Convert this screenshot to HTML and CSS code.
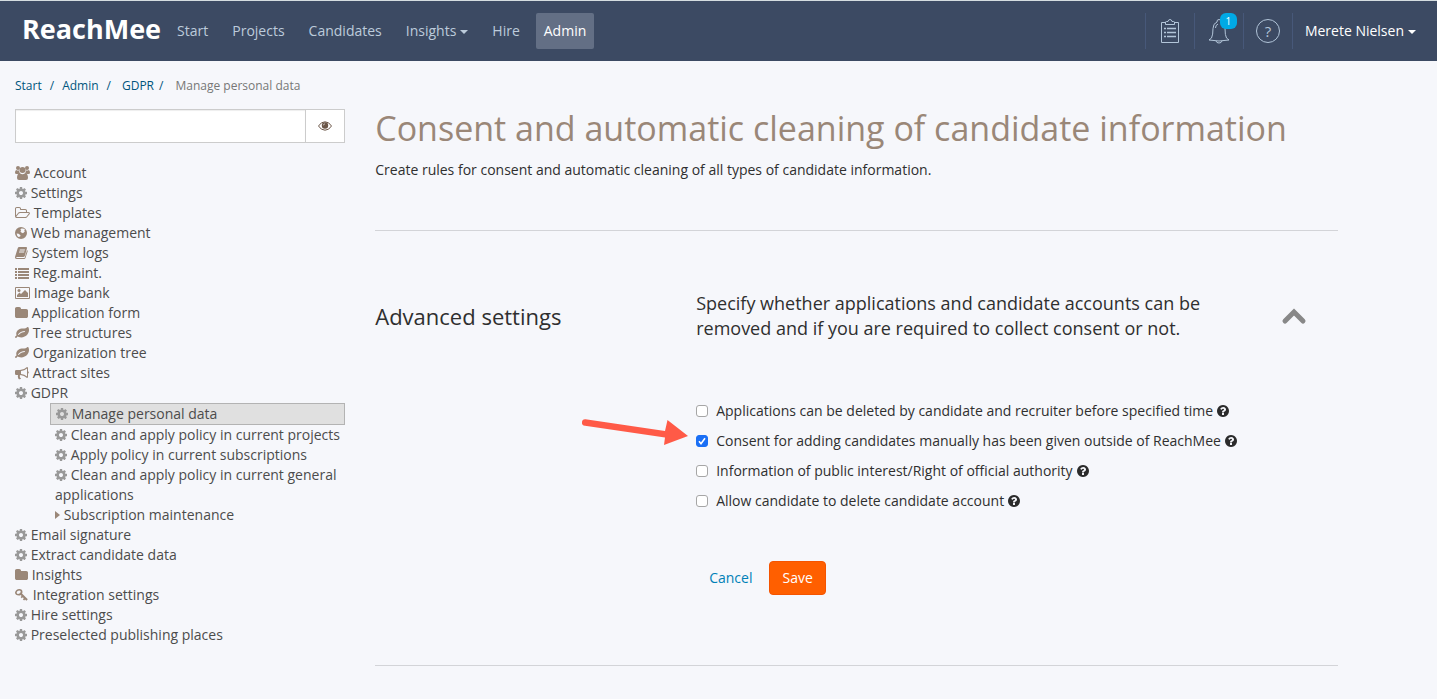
FILE: index.html
```
<!DOCTYPE html>
<html lang="en">

<head>
    <meta charset="UTF-8">
    <meta name="viewport" content="width=device-width, initial-scale=1.0">
    <title>ReachMee - Manage personal data</title>
    <link rel="stylesheet" href="styles.css">
</head>

<body>
    <!-- Icon sprite -->
    <svg class="sprite" aria-hidden="true">
        <symbol id="cog" viewBox="128 0 1536 1792">
            <path d="M1152 896q0-106-75-181t-181-75-181 75-75 181 75 181 181 75 181-75 75-181zm512-109v222q0 12-8 23t-20 13l-185 28q-19 54-39 91 35 50 107 138 10 12 10 25t-9 23q-27 37-99 108t-94 71q-12 0-26-9l-138-108q-44 23-91 38-16 136-29 186-7 28-36 28h-222q-14 0-24.500-8.500t-11.500-21.500l-28-184q-49-16-90-37l-141 107q-10 9-25 9-14 0-25-11-126-114-165-168-7-10-7-23 0-12 8-23 15-21 51-66.500t54-70.500q-27-50-41-99l-183-27q-13-2-21-12.500t-8-23.500v-222q0-12 8-23t19-13l186-28q14-46 39-92-40-57-107-138-10-12-10-24 0-10 9-23 26-36 98.500-107.500t94.500-71.500q13 0 26 10l138 107q44-23 91-38 16-136 29-186 7-28 36-28h222q14 0 24.500 8.500t11.500 21.500l28 184q49 16 90 37l142-107q9-9 24-9 13 0 25 10 129 119 165 170 7 8 7 22 0 12-8 23-15 21-51 66.500t-54 70.500q26 50 41 98l183 28q13 2 21 12.500t8 23.500z"/>
        </symbol>
        <symbol id="question" viewBox="128 0 1536 1792">
            <path d="M1024 1376v-192q0-14-9-23t-23-9h-192q-14 0-23 9t-9 23v192q0 14 9 23t23 9h192q14 0 23-9t9-23zm256-672q0-88-55.500-163t-138.500-116-170-41q-243 0-371 213-15 24 8 42l132 100q7 6 19 6 16 0 25-12 53-68 86-92 34-24 86-24 48 0 85.500 26t37.500 59q0 38-20 61t-68 45q-63 28-115.500 86.500t-52.500 125.500v36q0 14 9 23t23 9h192q14 0 23-9t9-23q0-19 21.500-49.500t54.500-49.500q32-18 49-28.500t46-35 44.500-48 28-60.500 12.500-81zm384 192q0 209-103 385.500t-279.500 279.500-385.500 103-385.500-103-279.500-279.500-103-385.500 103-385.500 279.500-279.500 385.500-103 385.500 103 279.500 279.500 103 385.500z"/>
        </symbol>
        <symbol id="folder" viewBox="64 0 1664 1792">
            <path d="M1728 608v704q0 92-66 158t-158 66h-1216q-92 0-158-66t-66-158v-960q0-92 66-158t158-66h320q92 0 158 66t66 158v32h672q92 0 158 66t66 158z"/>
        </symbol>
        <symbol id="folder-open" viewBox="-64 0 1920 1792">
            <path d="M1717 931q0-35-53-35h-1088q-40 0-85.500 21.500t-71.500 52.500l-294 363q-18 24-18 40 0 35 53 35h1088q40 0 86-22t71-53l294-363q18-22 18-39zm-1141-163h768v-160q0-40-28-68t-68-28h-576q-40 0-68-28t-28-68v-64q0-40-28-68t-68-28h-320q-40 0-68 28t-28 68v853l256-315q44-53 116-87.500t140-34.500zm1269 163q0 62-46 120l-295 363q-43 53-116 87.500t-140 34.500h-1088q-92 0-158-66t-66-158v-960q0-92 66-158t158-66h320q92 0 158 66t66 158v32h544q92 0 158 66t66 158v160h192q54 0 99 24.500t67 70.500q15 32 15 68z"/>
        </symbol>
        <symbol id="leaf" viewBox="0 0 1792 1792">
            <path d="M1280 704q0-26-19-45t-45-19q-172 0-318 49.500t-259.500 134-235.500 219.500q-19 21-19 45 0 26 19 45t45 19q24 0 45-19 27-24 74-71t67-66q137-124 268.500-176t313.500-52q26 0 45-19t19-45zm512-198q0 95-20 193-46 224-184.500 383t-357.500 268q-214 108-438 108-148 0-286-47-15-5-88-42t-96-37q-16 0-39.500 32t-45 70-52.500 70-60 32q-43 0-63.500-17.500t-45.500-59.500q-2-4-6-11t-5.500-10-3-9.500-1.500-13.500q0-35 31-73.500t68-65.500 68-56 31-48q0-4-14-38t-16-44q-9-51-9-104 0-115 43.500-220t119-184.500 170.500-139 204-95.500q55-18 145-25.500t179.500-9 178.500-6 163.500-24 113.500-56.500l29.500-29.500 29.500-28 27-20 36.500-16 43.500-4.500q39 0 70.500 46t47.500 112 24 124 8 96z"/>
        </symbol>
        <symbol id="users" viewBox="0 0 15 14">
            <circle cx="3" cy="2" r="2"/>
            <circle cx="12" cy="2" r="2"/>
            <circle cx="7.500" cy="4" r="3"/>
            <path d="M1.200 4q1.800 1 3 .2Q4 6 5 7.200 3.700 7.200 3 8H1.500Q0 8 0 6.700 0 4.500 1.200 4zM13.800 4q-1.800 1-3 .2.200 1.800-.8 3 1.300 0 2 .8h1.500Q15 8 15 6.700 15 4.500 13.800 4zM5 7.300q2.500 1.700 5 0 3 .2 3 4.700 0 2-2 2H4q-2 0-2-2 0-4.500 3-4.700z"/>
        </symbol>
        <symbol id="globe" viewBox="0 0 12 14">
            <path fill-rule="evenodd" d="M6 1a6 6 0 1 1 0 12A6 6 0 0 1 6 1zM6.500 2.500L5.300 3.300l.9.900-.8 1 .9 1.200L8 7.200l1.800-1.700L9.200 4l1-.3Q9 2.300 6.500 2.500zM1.600 7.500q.2 2.300 2 3.500l1.600-.4.300-1.400L3.600 7.800z"/>
        </symbol>
        <symbol id="book" viewBox="0 0 13 14">
            <path fill-rule="evenodd" d="M4.300 1H11q1.300 0 1 1.200L9.800 9.900Q9.500 11 8.300 11H2q-.8 0-.8.600 0 .5.800.5h7q.6 0 .8-.6L12 4.200q.9.200.7 1L10.500 12q-.3 1-1.400 1H1.800Q.2 13 0 11.400q0-.8.300-1.500L2.700 2.200Q3 1 4.300 1zM4.800 3.500l-.3.900h5.200l.3-.9zM4.200 5.600l-.3.900h5.200l.3-.9z"/>
        </symbol>
        <symbol id="list" viewBox="0 0 14 14">
            <path d="M0 2h2v2H0zM3 2h11v2H3zM0 5h2v2H0zM3 5h11v2H3zM0 8h2v2H0zM3 8h11v2H3zM0 11h2v2H0zM3 11h11v2H3z"/>
        </symbol>
        <symbol id="picture" viewBox="0 0 15 14">
            <path fill-rule="evenodd" d="M1 1h13q1 0 1 1v10q0 1-1 1H1q-1 0-1-1V2q0-1 1-1zm0 1v10h13V2z"/>
            <circle cx="4" cy="4.500" r="1.500"/>
            <path d="M2 11V9l2.500-2.500L6 8l4-4 3 3v4z"/>
        </symbol>
        <symbol id="bullhorn" viewBox="0 0 14 14">
            <path fill-rule="evenodd" d="M13 5.200a1.300 1.300 0 0 1 0 2.400V11q0 1-1 1Q9.300 9.300 5.500 9q-1.200.5-.6 1.500-.5.900.8 1.700.3.500.6.600-1.500.8-2.800.1Q2.400 10.500 3 9H1.200Q0 9 0 7.800V5.200Q0 4 1.200 4H5q4 0 7-3 1 0 1 1zM12 2.400Q9.500 4.600 6 5v3q3.500.4 6 2.500z"/>
        </symbol>
        <symbol id="key" viewBox="0 0 14 14">
            <path fill-rule="evenodd" d="M4.300 1Q7.500 1.100 7.500 4q0 .9-.5 1.600l5.800 5.700-1.500 1.400-1.200-1.200-1 1-1.300-1.300 1-1-1-1-1 1-1.200-1.300 1-1-.9-.8Q5 7.600 4 7.600.1 7.500 0 4.500 1 1.300 4.300 1zM4 2.600Q1.800 3 1.600 4.800 1.900 6 3.200 6 5.400 5.600 5.800 3.800 5.500 2.600 4 2.600z"/>
        </symbol>
        <symbol id="caret" viewBox="0 0 5 14">
            <path d="M0 3l5 4-5 4z"/>
        </symbol>
    </svg>

    <!-- Top navigation -->
    <header class="navbar">
        <a href="#start" class="brand">ReachMee</a>
        <nav class="nav-links">
            <a href="#start">Start</a>
            <a href="#projects">Projects</a>
            <a href="#candidates">Candidates</a>
            <a href="#insights">Insights<span class="caret"></span></a>
            <a href="#hire">Hire</a>
            <a href="#admin" class="active">Admin</a>
        </nav>
        <div class="nav-tools">
            <button type="button" class="tool" aria-label="Tasks">
                <svg width="20" height="26" viewBox="0 0 20 26" fill="none" stroke="currentColor">
                    <path d="M6 4.500H1.500v20h17v-20H14M5.500 6.500v-2q0-1 1-1h1.500q.3-2 2-2t2 2h1.500q1 0 1 1v2z"/>
                    <path d="M4 10.500h2M7 10.500h9M4 14.500h2M7 14.500h9M4 18.500h2M7 18.500h9" stroke-width="1.500"/>
                </svg>
            </button>
            <button type="button" class="tool" aria-label="Notifications">
                <svg width="22" height="26" viewBox="0 0 22 26" fill="none" stroke="currentColor" stroke-linejoin="round">
                    <path d="M9 4q-.3-2.500 2-2.500T13 4q4 1.500 4 6.500 0 7 1.500 9.500l2.500 2q-10 2-20 0l2.500-2Q5 17 5 10.500 5 5.500 9 4zM8 23q.5 2 3 2t3-2M7.500 10q0-3 2.500-4"/>
                </svg>
                <span class="count">1</span>
            </button>
            <button type="button" class="tool" aria-label="Help">
                <span class="help-circle">?</span>
            </button>
            <button type="button" class="user">Merete Nielsen<span class="caret"></span></button>
        </div>
    </header>

    <!-- Breadcrumb -->
    <nav class="breadcrumb">
        <a href="#start">Start</a><i>/</i>
        <a href="#admin">Admin</a><i>/</i>
        <a href="#gdpr" class="last">GDPR</a><i>/</i>
        <span>Manage personal data</span>
    </nav>

    <div class="page">
        <!-- Sidebar -->
        <aside class="sidebar">
            <form class="search">
                <input type="text" aria-label="Search menu">
                <button type="button" aria-label="Show">
                    <svg width="14" height="10" viewBox="0 0 14 10">
                        <path d="M.5 5Q3 .8 7 .8T13.500 5Q11 9.200 7 9.200T.5 5z" fill="none" stroke="currentColor"/>
                        <circle cx="7" cy="4.500" r="3.200" fill="currentColor"/>
                        <path d="M5.500 4.300Q5.500 3 6.800 2.900" fill="none" stroke="#fff" stroke-width=".7"/>
                    </svg>
                </button>
            </form>
            <ul class="menu">
                <li><a href="#account"><svg class="icon w15"><use href="#users"/></svg> Account</a></li>
                <li><a href="#settings"><svg class="icon grey w12"><use href="#cog"/></svg> Settings</a></li>
                <li><a href="#templates"><svg class="icon w15"><use href="#folder-open"/></svg> Templates</a></li>
                <li><a href="#web"><svg class="icon w12"><use href="#globe"/></svg> Web management</a></li>
                <li><a href="#logs"><svg class="icon w13"><use href="#book"/></svg> System logs</a></li>
                <li><a href="#reg"><svg class="icon w14"><use href="#list"/></svg> Reg.maint.</a></li>
                <li><a href="#images"><svg class="icon w15"><use href="#picture"/></svg> Image bank</a></li>
                <li><a href="#form"><svg class="icon w13"><use href="#folder"/></svg> Application form</a></li>
                <li><a href="#trees"><svg class="icon w14"><use href="#leaf"/></svg> Tree structures</a></li>
                <li><a href="#organization"><svg class="icon w14"><use href="#leaf"/></svg> Organization tree</a></li>
                <li><a href="#attract"><svg class="icon w14"><use href="#bullhorn"/></svg> Attract sites</a></li>
                <li>
                    <a href="#gdpr"><svg class="icon grey w12"><use href="#cog"/></svg> GDPR</a>
                    <ul class="submenu">
                        <li class="active"><a href="#personal"><svg class="icon grey w12"><use href="#cog"/></svg> Manage personal data</a></li>
                        <li><a href="#clean-projects"><svg class="icon grey w12"><use href="#cog"/></svg> Clean and apply policy in current projects</a></li>
                        <li><a href="#subscriptions"><svg class="icon grey w12"><use href="#cog"/></svg> Apply policy in current subscriptions</a></li>
                        <li><a href="#clean-general"><svg class="icon grey w12"><use href="#cog"/></svg> Clean and apply policy in current general applications</a></li>
                        <li><a href="#maintenance"><svg class="icon w5"><use href="#caret"/></svg> Subscription maintenance</a></li>
                    </ul>
                </li>
                <li><a href="#signature"><svg class="icon grey w12"><use href="#cog"/></svg> Email signature</a></li>
                <li><a href="#extract"><svg class="icon grey w12"><use href="#cog"/></svg> Extract candidate data</a></li>
                <li><a href="#insights"><svg class="icon w13"><use href="#folder"/></svg> Insights</a></li>
                <li><a href="#integration"><svg class="icon w14"><use href="#key"/></svg> Integration settings</a></li>
                <li><a href="#hire"><svg class="icon grey w12"><use href="#cog"/></svg> Hire settings</a></li>
                <li><a href="#publishing"><svg class="icon grey w12"><use href="#cog"/></svg> Preselected publishing places</a></li>
            </ul>
        </aside>

        <!-- Main Content -->
        <main class="content">
            <h1>Consent and automatic cleaning of candidate information</h1>
            <p class="intro">Create rules for consent and automatic cleaning of all types of candidate information.</p>

            <section class="settings">
                <div class="settings-header">
                    <h2>Advanced settings</h2>
                    <p>Specify whether applications and candidate accounts can be removed and if you are required to collect consent or not.</p>
                    <button type="button" class="collapse" aria-label="Collapse">
                        <svg width="26" height="18" viewBox="0 0 26 18" fill="none" stroke="currentColor" stroke-width="5" stroke-linecap="round">
                            <path d="M4 14L13 5l9 9"/>
                        </svg>
                    </button>
                </div>

                <form class="options">
                    <div class="option">
                        <input type="checkbox" id="opt-delete">
                        <label for="opt-delete">Applications can be deleted by candidate and recruiter before specified time</label>
                        <svg class="icon dark w12"><use href="#question"/></svg>
                    </div>
                    <div class="option">
                        <svg class="arrow" width="110" height="34" viewBox="0 0 110 34" fill="#ff5a47" aria-hidden="true">
                            <path d="M4.500 5.200L84 17 86.500 6 107 22 83 31 84 23.500 4 11.800A3.300 3.300 0 0 1 4.500 5.200z"/>
                        </svg>
                        <input type="checkbox" id="opt-consent" checked>
                        <label for="opt-consent">Consent for adding candidates manually has been given outside of ReachMee</label>
                        <svg class="icon dark w12"><use href="#question"/></svg>
                    </div>
                    <div class="option">
                        <input type="checkbox" id="opt-public">
                        <label for="opt-public">Information of public interest/Right of official authority</label>
                        <svg class="icon dark w12"><use href="#question"/></svg>
                    </div>
                    <div class="option">
                        <input type="checkbox" id="opt-account">
                        <label for="opt-account">Allow candidate to delete candidate account</label>
                        <svg class="icon dark w12"><use href="#question"/></svg>
                    </div>
                    <div class="buttons">
                        <button type="button" class="btn btn-link">Cancel</button>
                        <button type="submit" class="btn btn-save">Save</button>
                    </div>
                </form>
            </section>
        </main>
    </div>
</body>

</html>
```
FILE: styles.css
```
:root {
    --navy: #3c4a63;
    --nav-text: #bccbdb;
    --background: #f6f7fb;
    --text: #2f2f2f;
    --brown: #9a8778;
    --border: #cccccc;
    --link: #00557d;
    --orange: #ff5f00;
}

* {
    margin: 0;
    padding: 0;
    box-sizing: border-box;
}

body {
    font-family: 'Open Sans', 'Noto Sans', sans-serif;
    font-size: 14px;
    line-height: 20px;
    color: var(--text);
    background-color: var(--background);
}

a {
    text-decoration: none;
}

ul {
    list-style: none;
}

button {
    font: inherit;
    background: none;
    border: none;
    cursor: pointer;
}

.sprite {
    display: none;
}

/* Navbar */
.navbar {
    display: flex;
    align-items: center;
    padding: 12px 8px 12px 22px;
    background-color: var(--navy);
    border-top: 1px solid #d5dde0;
}

.brand {
    color: white;
    font-size: 27px;
    font-weight: 700;
    line-height: 32px;
    padding-bottom: 4px;
}

.nav-links {
    display: flex;
    gap: 8px;
    margin-left: 8px;
}

.nav-links a {
    padding: 8px;
    color: var(--nav-text);
    border-radius: 2px;
}

.nav-links a.active {
    color: white;
    background-color: #636f85;
}

.caret {
    display: inline-block;
    margin-left: 4px;
    vertical-align: middle;
    border-top: 4px solid;
    border-left: 4px solid transparent;
    border-right: 4px solid transparent;
}

.nav-tools {
    display: flex;
    margin-left: auto;
}

.tool {
    position: relative;
    display: flex;
    align-items: center;
    justify-content: center;
    width: 49px;
    height: 36px;
    color: #b2c5d9;
    border-left: 1px solid #475879;
}

.count {
    position: absolute;
    top: 0;
    right: 6px;
    width: 17px;
    height: 16px;
    color: white;
    font-size: 10px;
    line-height: 16px;
    background-color: #00a9e5;
    border-radius: 6px;
}

.help-circle {
    width: 24px;
    height: 24px;
    font-size: 15px;
    line-height: 22px;
    border: 1px solid;
    border-radius: 50%;
}

.user {
    padding: 0 13px 0 12px;
    color: white;
    border-left: 1px solid #475879;
}

/* Breadcrumb */
.breadcrumb {
    display: flex;
    padding: 15px 15px 13px;
    font-size: 12px;
    color: #777777;
}

.breadcrumb a,
.breadcrumb i {
    color: var(--link);
    font-style: normal;
}

.breadcrumb i {
    margin: 0 8px;
}

.breadcrumb .last {
    margin-left: 3px;
}

.breadcrumb .last + i {
    margin: 0 12px 0 5px;
}

/* Page columns */
.page {
    display: grid;
    grid-template-columns: 25% 67%;
    column-gap: 16px;
}

.sidebar {
    padding: 0 14px 0 15px;
}

.search {
    display: flex;
    height: 34px;
    margin-bottom: 20px;
}

.search input {
    flex: 1;
    min-width: 0;
    padding: 6px 12px;
    font: inherit;
    background-color: white;
    border: 1px solid var(--border);
    box-shadow: inset 0 1px 1px rgba(0, 0, 0, 0.07);
}

.search button {
    display: flex;
    align-items: center;
    justify-content: center;
    width: 39px;
    color: #6b5648;
    background-color: white;
    border: 1px solid var(--border);
    border-left: none;
}

.menu a {
    color: #4c4c4c;
}

.submenu {
    margin-left: 35px;
}

.submenu li {
    padding-left: 5px;
}

.submenu .active {
    background-color: #e0e0e0;
    border: 1px solid #b3b3b3;
}

/* Icons */
.icon {
    display: inline-block;
    height: 14px;
    vertical-align: -2px;
    fill: var(--brown);
}

.icon.grey {
    fill: #999999;
}

.icon.dark {
    fill: #2b2b2b;
}

.w5 {
    width: 5px;
}

.w12 {
    width: 12px;
}

.w13 {
    width: 13px;
}

.w14 {
    width: 14px;
}

.w15 {
    width: 15px;
}

/* Main content */
h1 {
    color: var(--brown);
    font-size: 34px;
    font-weight: 400;
    line-height: 38px;
}

.intro {
    margin: 13px 0 50px;
}

.settings {
    padding: 60px 0 70px;
    border-top: 1px solid #d3d4d8;
    border-bottom: 1px solid #d3d4d8;
}

.settings-header {
    display: flex;
    align-items: center;
    margin-bottom: 60px;
}

h2 {
    width: calc(100% / 3);
    font-size: 22px;
    font-weight: 400;
    line-height: 26px;
}

.settings-header p {
    flex: 1;
    padding-right: 40px;
    font-size: 18px;
    line-height: 25px;
}

.collapse {
    display: flex;
    margin-right: 31px;
    color: #888888;
}

.options {
    margin-left: calc(100% / 3);
}

.option {
    position: relative;
    display: flex;
    align-items: center;
    margin-bottom: 10px;
}

.option input {
    appearance: none;
    width: 12px;
    height: 12px;
    margin-right: 8px;
    background-color: white;
    border: 1px solid #a6a6a6;
    border-radius: 3px;
}

.option input:checked {
    background: #1a6ff5 url("data:image/svg+xml,%3Csvg xmlns='http://www.w3.org/2000/svg' viewBox='0 0 12 12'%3E%3Cpath d='M3 6.300l2 2.400 4-5.500' fill='none' stroke='white' stroke-width='1.600'/%3E%3C/svg%3E") center / 12px;
    border-color: #1a6ff5;
}

.option .icon {
    margin-left: 4px;
}

.arrow {
    position: absolute;
    right: calc(100% + 5px);
    top: -17px;
}

.buttons {
    display: flex;
    gap: 4px;
    margin-top: 50px;
}

.btn {
    padding: 6px 12px;
    border: 1px solid transparent;
    border-radius: 4px;
}

.btn-link {
    color: #0080b7;
}

.btn-save {
    color: white;
    background-color: var(--orange);
    border-color: #f55400;
}
```
